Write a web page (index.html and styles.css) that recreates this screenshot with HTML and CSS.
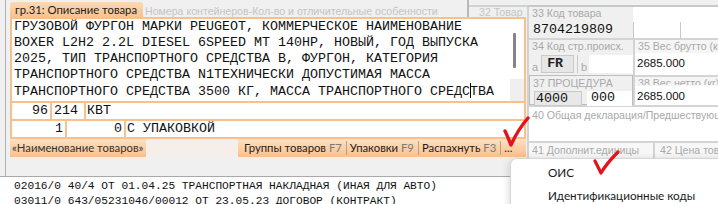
FILE: index.html
```html
<!DOCTYPE html>
<html lang="ru">
<head>
<meta charset="utf-8">
<link rel="stylesheet" href="styles.css">
</head>
<body>
<div class="page">
  <div class="top">
    <section class="left">
      <div class="head">
        <div class="tab">гр.31: Описание товара</div>
        <div class="ghost">Номера контейнеров-Кол-во и отличительные особенности</div>
        <div class="g32"><div class="g32-in">32 Товар</div></div>
      </div>
      <div class="frame">
        <div class="editor">
          <div class="text">ГРУЗОВОЙ ФУРГОН МАРКИ PEUGEOT, КОММЕРЧЕСКОЕ НАИМЕНОВАНИЕ
BOXER L2H2 2.2L DIESEL 6SPEED MT 140HP, НОВЫЙ, ГОД ВЫПУСКА
2025, ТИП ТРАНСПОРТНОГО СРЕДСТВА В, ФУРГОН, КАТЕГОРИЯ
ТРАНСПОРТНОГО СРЕДСТВА N1ТЕХНИЧЕСКИ ДОПУСТИМАЯ МАССА
ТРАНСПОРТНОГО СРЕДСТВА 3500 КГ, МАССА ТРАНСПОРТНОГО СРЕДС<span class="caret"></span>ТВА</div>
          <div class="vscroll"><div class="thumb"></div><div class="vcorner"></div></div>
        </div>
        <div class="row">
          <div class="cell num w1">96</div>
          <div class="cell w2">214</div>
          <div class="cell grow">КВТ</div>
        </div>
        <div class="row">
          <div class="cell num w3">1</div>
          <div class="cell num w4">0</div>
          <div class="cell grow">С УПАКОВКОЙ</div>
        </div>
        <div class="toolbar">
          <div class="tb-name">«Наименование товаров»</div>
          <div class="tb-gap"></div>
          <div class="tb-btns">
            <span class="btn">Группы товаров <span class="key">F7</span></span>
            <span class="btn sep">Упаковки <span class="key">F9</span></span>
            <span class="btn sep">Распахнуть <span class="key">F3</span></span>
            <span class="btn sep dots">...</span>
          </div>
        </div>
      </div>
    </section>
    <section class="right">
      <div class="ra">
        <div class="c33">
          <div class="lbl">33 Код товара</div>
          <div class="mono v33">8704219809</div>
        </div>
        <div class="ra-right">
          <div class="ra-sp"></div>
          <div class="ra-boxes"><div class="rb1"></div><div class="rb2"></div></div>
        </div>
      </div>
      <div class="rb">
        <div class="c34">
          <div class="lbl">34 Код стр.происх.</div>
          <div class="c34-in">
            <span class="ab">a</span>
            <span class="mono fr">FR</span>
            <span class="vdiv"></span>
            <span class="ab">b</span>
            <span class="wbox"></span>
          </div>
        </div>
        <div class="cw">
          <div class="lbl">35 Вес брутто (кг)</div>
          <div class="wval">2685.000</div>
        </div>
      </div>
      <div class="rc">
        <div class="c37">
          <div class="lbl">37 ПРОЦЕДУРА</div>
          <div class="c37-in">
            <span class="mono pbox">4000</span>
            <span class="mono pval">000</span>
          </div>
        </div>
        <div class="cw">
          <div class="lbl">38 Вес нетто (кг)</div>
          <div class="wval v38">2685.000</div>
        </div>
      </div>
      <div class="rd">
        <div class="lbl">40 Общая декларация/Предшествующий документ</div>
      </div>
      <div class="re">
        <div class="c41"><div class="lbl">41 Дополнит.единицы</div></div>
        <div class="c42"><div class="lbl">42 Цена товара</div></div>
      </div>
    </section>
  </div>
  <div class="bottom">
    <div class="bl">02016/0 40/4 ОТ 01.04.25 ТРАНСПОРТНАЯ НАКЛАДНАЯ (ИНАЯ ДЛЯ АВТО)</div>
    <div class="bl">03011/0 643/05231046/00012 ОТ 23.05.23 ДОГОВОР (КОНТРАКТ)</div>
  </div>
  <div class="menu">
    <div class="mi">ОИС</div>
    <div class="mi">Идентификационные коды</div>
  </div>
  <svg class="check c1" viewBox="0 0 28 32" width="28" height="32"><path d="M3 15 C5 19 7 24 9 29 C13 20 19 10 26 2" fill="none" stroke="#e3121b" stroke-width="3.4" stroke-linecap="round" stroke-linejoin="round"/></svg>
  <svg class="check c2" viewBox="0 0 28 26" width="28" height="26"><path d="M3 11 C5 15 7 19 9 23 C13 16 19 9 26 2" fill="none" stroke="#e3121b" stroke-width="3.2" stroke-linecap="round" stroke-linejoin="round"/></svg>
</div>
</body>
</html>
```
FILE: styles.css
```css
* { box-sizing: border-box; margin: 0; padding: 0; }
html, body { width: 718px; height: 204px; overflow: hidden; background: #f0f0f0; }
body { font-family: Lato, Roboto, "Noto Sans", sans-serif; font-size: 11.3px; color: #1a1a1a; }
.mono { font-family: "Liberation Mono", "DejaVu Sans Mono", monospace; }

.page { width: 718px; height: 204px; display: flex; flex-direction: column; position: relative; overflow: hidden; }
.top { display: flex; height: 176px; flex-shrink: 0; }

.left { width: 522px; flex-shrink: 0; margin-left: 5px; border-left: 1px solid #b4b4b4; padding-left: 4px; display: flex; flex-direction: column; }
.head { height: 17px; display: flex; align-items: flex-start; }
.tab { width: 133px; flex-shrink: 0; height: 15px; margin-top: 2px; padding-left: 5px; line-height: 15px; border-radius: 3px 3px 0 0; background: linear-gradient(#fdd8b2, #f9c28f); color: #1c1c1c; white-space: nowrap; }
.ghost { flex: 1; min-width: 0; margin-top: 5px; padding-left: 2px; font-family: "Liberation Sans", sans-serif; font-size: 10.6px; line-height: 13px; color: #c4c4c4; white-space: nowrap; overflow: hidden; }
.g32 { width: 60px; flex-shrink: 0; height: 17px; border-left: 2px solid #b9b9b9; }
.g32-in { margin-top: 5px; border-top: 2px solid #d2d2d2; padding-left: 10px; font-family: "Liberation Sans", sans-serif; font-size: 10.6px; line-height: 10px; color: #c4c4c4; white-space: nowrap; overflow: hidden; }

.frame { width: 516px; background: #f8c08d; border: 2px solid #f8c08d; border-bottom: none; display: flex; flex-direction: column; }
.editor { height: 82px; background: #fff; display: flex; }
.text { flex: 1; padding-left: 2px; font-family: "Liberation Mono", "DejaVu Sans Mono", monospace; font-size: 13.33px; line-height: 16px; white-space: pre; color: #111; overflow: hidden; }
.caret { display: inline-block; width: 1px; height: 15px; background: #000; vertical-align: -3px; margin-right: -1px; }
.vscroll { width: 14px; display: flex; flex-direction: column; padding-top: 14px; }
.thumb { width: 3px; height: 35px; margin-left: 3px; background: #858585; border-radius: 1px; }
.vcorner { margin-top: auto; height: 22px; background: #efefef; }

.row { height: 16px; margin-top: 2px; display: flex; gap: 2px; }
.cell { background: #fff; font-family: "Liberation Mono", "DejaVu Sans Mono", monospace; font-size: 13.33px; line-height: 16px; padding: 0 2px; white-space: pre; color: #111; }
.num { text-align: right; }
.w1 { width: 38px; }
.w2 { width: 32px; }
.w3 { width: 53px; }
.w4 { width: 57px; }
.grow { flex: 1; padding-left: 1px; }

.toolbar { height: 18px; margin-top: 2px; margin-left: -2px; margin-right: -2px; display: flex; background: #fff; }
.tb-name { width: 136px; flex-shrink: 0; padding-left: 2px; line-height: 17px; background: linear-gradient(#fde0c2, #f9c08c); color: #333; white-space: nowrap; overflow: hidden; }
.tb-gap { width: 92px; flex-shrink: 0; background: #f6efe9; }
.tb-btns { flex: 1; min-width: 0; display: flex; align-items: center; padding-left: 3px; background: linear-gradient(#fde0c2, #f9c08c); white-space: nowrap; overflow: hidden; }
.btn { padding: 0 4px 0 3px; line-height: 14px; color: #1c1c1c; }
.btn.sep { border-left: 1px solid #b79f88; }
.key { color: #7a7a7a; }

.right { width: 191px; flex-shrink: 0; margin-top: 5px; border-top: 2px solid #c8c8c8; border-left: 2px solid #d2d2d2; display: flex; flex-direction: column; }
.lbl { font-family: "Liberation Sans", "Noto Sans", sans-serif; font-size: 10.6px; line-height: 11px; color: #a9a9a9; padding-left: 3px; white-space: nowrap; overflow: hidden; }
.ra { height: 33px; display: flex; border-bottom: 2px solid #d4d4d4; }
.c33 { width: 104px; background: #f0f0f0; padding-top: 1px; }
.v33 { font-size: 13.33px; line-height: 16px; padding-left: 4px; margin-top: 3px; color: #111; }
.ra-right { flex: 1; background: #fff; display: flex; flex-direction: column; }
.ra-sp { height: 15px; }
.ra-boxes { flex: 1; display: flex; }
.rb1 { width: 47px; border-left: 1px solid #c8c8c8; }
.rb2 { flex: 1; border-left: 1px solid #c8c8c8; }

.rb { height: 37px; display: flex; border-bottom: 2px solid #d4d4d4; }
.c34 { width: 104px; background: #f0f0f0; padding-top: 1px; }
.c34-in { display: flex; align-items: flex-end; margin-top: 3px; height: 18px; padding-left: 3px; }
.ab { font-family: "Liberation Sans", sans-serif; font-size: 11px; line-height: 11px; color: #a9a9a9; }
.fr { width: 33px; height: 18px; margin-left: 3px; background: #e6e6e6; border: 1px solid #cacaca; font-size: 13.33px; line-height: 16px; padding-left: 5px; font-weight: bold; color: #222; }
.vdiv { width: 1px; height: 18px; margin-left: 3px; background: #c8c8c8; }
.wbox { width: 44px; height: 18px; margin-left: 2px; background: #fff; }
.vdiv + .ab { margin-left: 3px; }
.cw { flex: 1; min-width: 0; border-left: 2px solid #d4d4d4; background: #f5f5f5; padding-top: 1px; display: flex; flex-direction: column; }
.wval { flex: 1; margin-top: 1px; background: #fff; font-family: "Liberation Sans", sans-serif; font-size: 11.5px; line-height: 20px; padding-left: 2px; color: #111; }
.v38 { line-height: 17px; padding-top: 2px; }

.rc { height: 30px; display: flex; border-bottom: 2px solid #d4d4d4; }
.c37 { width: 104px; background: #f0f0f0; border: 1px solid #bdbdbd; margin-top: -2px; }
.c37 .lbl { line-height: 13px; padding-top: 1px; }
.c37-in { display: flex; margin-top: 1px; padding-left: 4px; height: 15px; }
.pbox { width: 48px; background: #e8e8e8; border: 1px solid #c9c9c9; font-size: 13.33px; line-height: 13px; padding-left: 1px; color: #111; }
.pval { flex: 1; margin-left: 5px; background: #fff; font-size: 13.33px; line-height: 13px; padding-left: 4px; color: #111; }

.rd { height: 36px; background: #fff; padding-top: 3px; border-bottom: 2px solid #d4d4d4; }
.re { flex: 1; display: flex; background: #f7f7f7; }
.c41 { width: 126px; padding-top: 2px; border-right: 2px solid #d4d4d4; }
.c42 { flex: 1; min-width: 0; padding-top: 2px; padding-left: 2px; }

.bottom { flex: 1; min-height: 0; overflow: hidden; background: #fff; border-top: 1px solid #a9a9a9; padding: 2px 0 0 14px; font-family: "Liberation Mono", "DejaVu Sans Mono", monospace; font-size: 11.2px; line-height: 15px; color: #111; }
.bl { white-space: pre; }

.menu { position: absolute; left: 510px; top: 158px; width: 230px; height: 60px; background: #fff; border: 1px solid #d6d6d6; border-radius: 7px; box-shadow: 0 2px 8px rgba(0,0,0,0.18); padding-top: 2px; }
.mi { height: 23px; line-height: 22px; padding-left: 37px; font-size: 11.7px; color: #1a1a1a; }

.check { position: absolute; }
.c1 { left: 502px; top: 116px; }
.c2 { left: 592px; top: 150px; }
```
